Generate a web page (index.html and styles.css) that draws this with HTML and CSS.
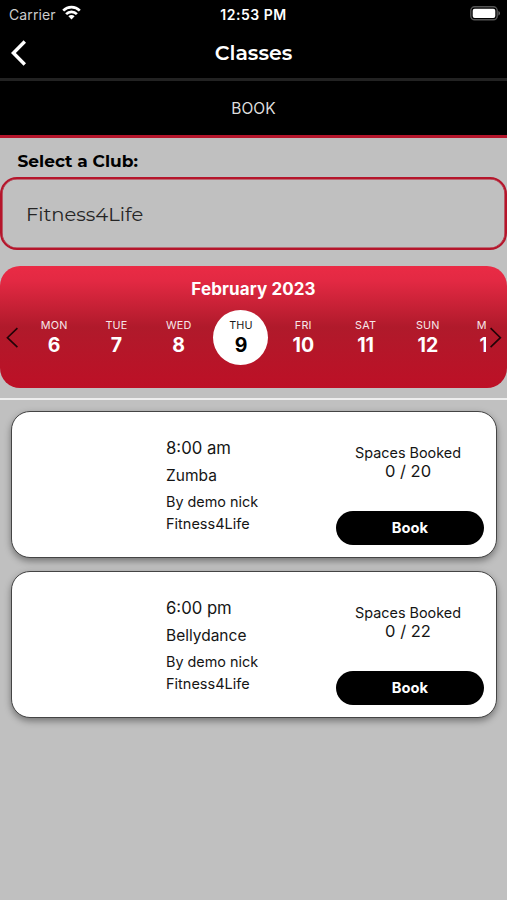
FILE: index.html
```html
<!DOCTYPE html>
<html lang="en">
<head>
    <meta charset="UTF-8">
    <meta name="viewport" content="width=device-width, initial-scale=1">
    <title>Classes</title>
    <link rel="stylesheet" href="styles.css">
</head>
<body>
    <div class="status-bar">
        <div class="carrier">
            <span class="carrier-name">Carrier</span>
            <svg class="wifi" width="19" height="15" viewBox="0 0 19 15" fill="none" stroke="#fff" stroke-width="2.7">
                <path d="M1.2 5.6a11.8 11.8 0 0 1 16.6 0"/>
                <path d="M4.1 9.1a7.6 7.6 0 0 1 10.8 0"/>
                <path d="M9.5 14.4l-3.1-3.2a4.4 4.4 0 0 1 6.2 0z" fill="#fff" stroke="none"/>
            </svg>
        </div>
        <span class="clock">12:53 PM</span>
        <svg class="battery" width="31" height="15" viewBox="0 0 31 15">
            <rect x="0.8" y="0.8" width="26.4" height="13" rx="3.8" fill="none" stroke="#555" stroke-width="1.4"/>
            <rect x="2.7" y="2.7" width="22.6" height="9.2" rx="2" fill="#fff"/>
            <path d="M28.4 5v4.6c2.2-1 2.2-3.6 0-4.6z" fill="#666"/>
        </svg>
    </div>

    <header class="nav-bar">
        <svg class="back" width="17" height="26" viewBox="0 0 17 26" fill="none" stroke="#fff" stroke-width="3.4">
            <path d="M14.8 1.5L3.4 13l11.4 11.5"/>
        </svg>
        <h1>Classes</h1>
    </header>

    <div class="tab">BOOK</div>

    <main>
        <label class="club-label">Select a Club:</label>
        <div class="club-select">Fitness4Life</div>

        <section class="calendar">
            <h2>February 2023</h2>
            <div class="week">
                <svg class="arrow" width="12" height="22" viewBox="0 0 12 22" fill="none" stroke="#210307" stroke-width="1.6">
                    <path d="M11.4 1.1L1.4 10.7l10 9.4"/>
                </svg>
                <div class="days">
                    <div class="day"><span>MON</span><b>6</b></div>
                    <div class="day"><span>TUE</span><b>7</b></div>
                    <div class="day"><span>WED</span><b>8</b></div>
                    <div class="day selected"><span>THU</span><b>9</b></div>
                    <div class="day"><span>FRI</span><b>10</b></div>
                    <div class="day"><span>SAT</span><b>11</b></div>
                    <div class="day"><span>SUN</span><b>12</b></div>
                    <div class="day"><span>MON</span><b>13</b></div>
                </div>
                <svg class="arrow" width="12" height="22" viewBox="0 0 12 22" fill="none" stroke="#210307" stroke-width="1.6">
                    <path d="M0.6 1.1L10.4 10.7L0.6 20.1"/>
                </svg>
            </div>
        </section>

        <section class="class-list">
            <article class="card">
                <div class="info">
                    <p class="time">8:00 am</p>
                    <p class="name">Zumba</p>
                    <p class="trainer">By demo nick</p>
                    <p class="club">Fitness4Life</p>
                </div>
                <div class="booking">
                    <p class="spaces">Spaces Booked</p>
                    <p class="count">0 / 20</p>
                    <button type="button">Book</button>
                </div>
            </article>
            <article class="card">
                <div class="info">
                    <p class="time">6:00 pm</p>
                    <p class="name">Bellydance</p>
                    <p class="trainer">By demo nick</p>
                    <p class="club">Fitness4Life</p>
                </div>
                <div class="booking">
                    <p class="spaces">Spaces Booked</p>
                    <p class="count">0 / 22</p>
                    <button type="button">Book</button>
                </div>
            </article>
        </section>
    </main>
</body>
</html>
```
FILE: styles.css
```css
* {
    box-sizing: border-box;
}

body {
    margin: 0;
    min-height: 900px;
    background-color: #c0c0c0;
    color: #151515;
    font-family: Inter, "Liberation Sans", sans-serif;
}

h1, h2, p {
    margin: 0;
}

.status-bar {
    display: grid;
    grid-template-columns: 1fr auto 1fr;
    align-items: center;
    height: 28px;
    padding: 0 6px;
    background-color: #000;
    color: #fff;
    font-size: 14px;
}

.carrier {
    display: flex;
    align-items: center;
    gap: 6px;
    padding-left: 3px;
}

.carrier-name {
    color: #ccc;
    font-size: 14px;
    letter-spacing: 0.1px;
}

.wifi {
    margin-top: -3px;
}

.clock {
    font-weight: 600;
    letter-spacing: 0.5px;
}

.battery {
    justify-self: end;
    margin-top: -1px;
}

.nav-bar {
    display: grid;
    grid-template-columns: 32px 1fr 32px;
    align-items: center;
    height: 53px;
    padding: 0 10px;
    border-bottom: 3px solid #222;
    background-color: #000;
    color: #fff;
}

.back {
    margin-top: -1px;
}

.nav-bar h1 {
    margin-top: -1px;
    font-family: Montserrat, Inter, sans-serif;
    font-size: 20.5px;
    font-weight: 600;
    line-height: 24px;
    text-align: center;
}

.tab {
    height: 57px;
    border-bottom: 3px solid #b5152b;
    background-color: #000;
    color: #ddd;
    font-size: 15.5px;
    line-height: 55px;
    text-align: center;
}

.club-label {
    display: block;
    height: 39px;
    padding: 3px 0 0 17.5px;
    color: #000;
    font-family: Montserrat, Inter, sans-serif;
    font-size: 17px;
    font-weight: 700;
    line-height: 40px;
}

.club-select {
    height: 73px;
    padding-left: 24px;
    border: 2px solid #b5152b;
    border-radius: 17px;
    box-shadow: inset 0 0 0 0.6px #b5152b;
    color: #252525;
    font-family: Montserrat, Inter, sans-serif;
    font-size: 19.5px;
    line-height: 71px;
}

.calendar {
    height: 122px;
    margin-top: 16px;
    padding-top: 12px;
    border-radius: 20px;
    background: linear-gradient(#ea2b45 0%, #e32943 12%, #b01a2b 50%, #bd1026 100%);
    color: #fff;
}

.calendar h2 {
    font-size: 17px;
    font-weight: 700;
    line-height: 22px;
    letter-spacing: 0.1px;
    text-align: center;
}

.week {
    display: flex;
    align-items: center;
    height: 55px;
    margin-top: 10px;
    padding: 0 5px 0 6px;
}

.arrow {
    flex: none;
}

.days {
    display: flex;
    flex: 1;
    margin: 0 4px 0 5px;
    overflow: hidden;
}

.day {
    display: flex;
    flex: none;
    flex-direction: column;
    align-items: center;
    width: 55px;
    height: 55px;
    margin: 0 3.65px;
    padding-top: 8px;
}

.day span {
    font-size: 10.8px;
    line-height: 15px;
    letter-spacing: 0.2px;
    opacity: 0.9;
}

.day b {
    font-size: 19.5px;
    line-height: 24px;
}

.day.selected {
    border-radius: 50%;
    background-color: #fff;
    color: #000;
}

.class-list {
    display: flex;
    flex-direction: column;
    gap: 12.5px;
    margin-top: 10px;
    padding: 11px 10px 0 11px;
    border-top: 2px solid #eee;
}

.card {
    display: flex;
    justify-content: space-between;
    height: 147px;
    padding: 0 12px 0 154px;
    border: 1px solid #444;
    border-radius: 19px;
    background-color: #fff;
    box-shadow: 0 3px 7px rgba(0, 0, 0, 0.4);
}

.info {
    padding-top: 24px;
    white-space: nowrap;
}

.time {
    font-size: 16.7px;
    line-height: 24px;
}

.name {
    margin-top: 5px;
    font-size: 15.5px;
    line-height: 22px;
}

.trainer {
    margin-top: 4px;
    font-size: 14.4px;
    line-height: 22px;
}

.club {
    font-size: 14.5px;
    line-height: 22px;
}

.booking {
    width: 148px;
    padding-top: 31px;
    text-align: center;
}

.spaces {
    padding-right: 4px;
    font-size: 14.4px;
    line-height: 20px;
}

.count {
    padding-right: 4px;
    font-size: 16.5px;
    line-height: 17px;
}

.booking button {
    width: 148px;
    height: 34px;
    margin-top: 31px;
    border: none;
    border-radius: 17px;
    background-color: #000;
    color: #fff;
    font-family: inherit;
    font-size: 14.7px;
    font-weight: 700;
}
```
